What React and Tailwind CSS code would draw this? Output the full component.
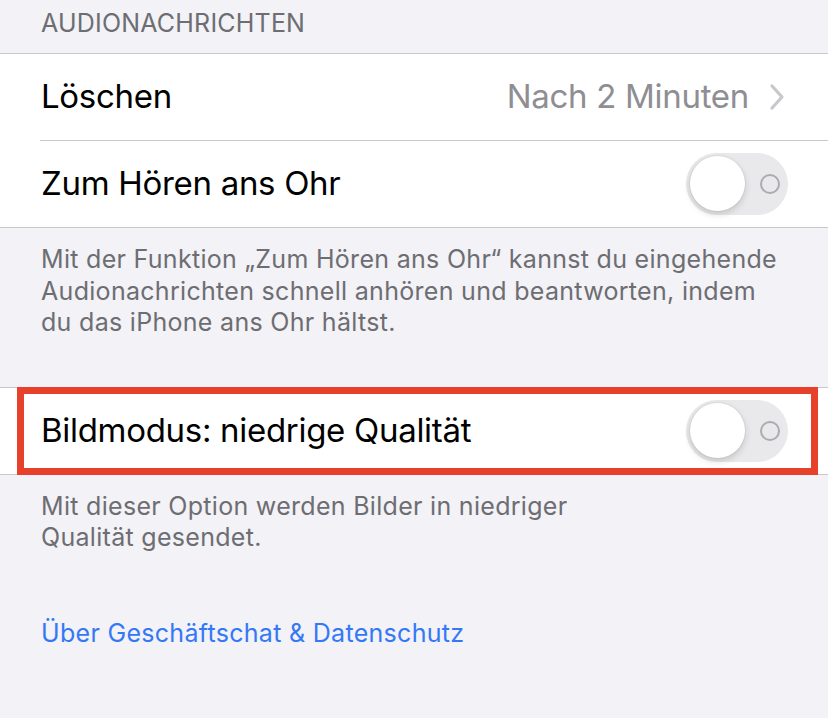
import React from "react";

function Toggle() {
  return (
    <div className="relative w-[102px] h-[62px] rounded-full bg-[#e9e9eb] shrink-0">
      <div className="absolute left-[4px] top-[3px] w-[55px] h-[55px] rounded-full bg-white shadow-[0_3px_7px_rgba(0,0,0,0.16),0_0_0_1px_rgba(0,0,0,0.04)]" />
      <div className="absolute left-[74px] top-[21px] w-[20px] h-[20px] rounded-full border-2 border-[#ababb0]" />
    </div>
  );
}

function Row({ children }) {
  return (
    <div className="h-[86px] flex items-center pl-[41px] pr-[40px] text-[33px] tracking-[-0.3px]">
      {children}
    </div>
  );
}

export default function App() {
  return (
    <div
      className="min-h-screen bg-[#f2f2f7] text-black"
      style={{ fontFamily: "Inter, 'Open Sans', sans-serif" }}
    >
      {/* Section header */}
      <div className="h-[53px] pl-[41px] pt-[8px] text-[25px] leading-[30px] text-[#6d6d72] tracking-[0.2px]">
        AUDIONACHRICHTEN
      </div>

      <div className="bg-white border-y border-[#c8c7cc]">
        <Row>
          <span className="flex-1">Löschen</span>
          <span className="text-[#8e8e93]">Nach 2 Minuten</span>
          <svg width="16" height="28" viewBox="0 0 16 28" className="ml-[20px] mr-[3px]">
            <path d="M3 3 L13 14 L3 25" fill="none" stroke="#c7c7cc" strokeWidth="3.2" strokeLinecap="round" strokeLinejoin="round" />
          </svg>
        </Row>
        <div className="ml-[40px] h-px bg-[#c8c7cc]" />
        <Row>
          <span className="flex-1">Zum Hören ans Ohr</span>
          <Toggle />
        </Row>
      </div>

      <div className="px-[41px] pt-[16px] pb-[48px] text-[25px] leading-[31.5px] tracking-[0.3px] text-[#6d6d72]">
        <div>Mit der Funktion „Zum Hören ans Ohr“ kannst du eingehende</div>
        <div>Audionachrichten schnell anhören und beantworten, indem</div>
        <div>du das iPhone ans Ohr hältst.</div>
      </div>

      <div className="relative bg-white border-y border-[#c8c7cc]">
        <Row>
          <span className="flex-1">Bildmodus: niedrige Qualität</span>
          <Toggle />
        </Row>
        <div className="absolute left-[17px] right-[10px] top-[-1px] bottom-[-1px] border-[7px] border-[#e8412b]" />
      </div>

      <div className="px-[41px] pt-[16px] text-[25px] leading-[31.5px] tracking-[0.3px] text-[#6d6d72]">
        <div>Mit dieser Option werden Bilder in niedriger</div>
        <div>Qualität gesendet.</div>
      </div>

      <div className="px-[41px] pt-[64px] text-[25px] leading-[31.5px] tracking-[0.3px] text-[#3478f6]">
        Über Geschäftschat &amp; Datenschutz
      </div>
    </div>
  );
}
